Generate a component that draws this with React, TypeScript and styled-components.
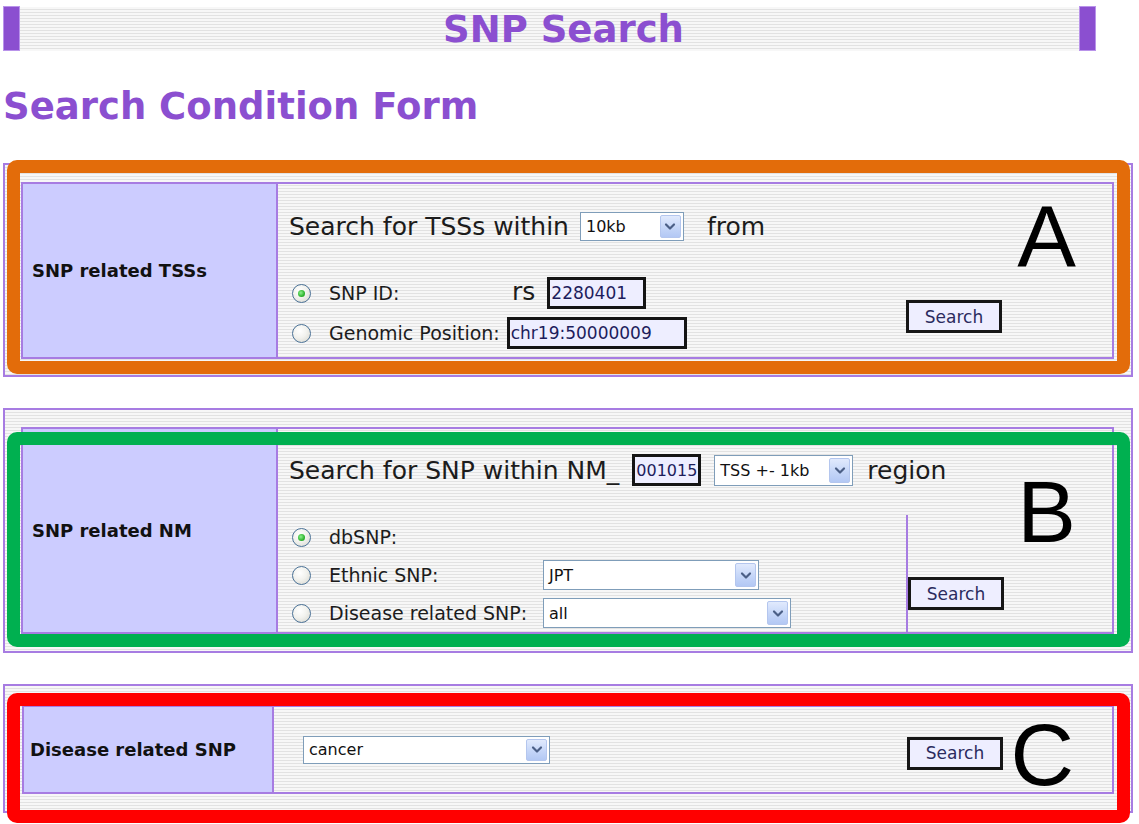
import React from 'react';
import styled, { createGlobalStyle } from 'styled-components';

const GlobalStyle = createGlobalStyle`
  html, body {
    margin: 0;
    padding: 0;
    background: #fff;
  }
  body {
    font-family: "DejaVu Sans", Verdana, sans-serif;
    color: #1a1a1a;
  }
`;

const purple = '#8b4fd0';
const line = '#a77ce2';
const stripes = `repeating-linear-gradient(180deg, #f7f7f7 0px, #f7f7f7 2px, #e2e2e2 2px, #e2e2e2 3px)`;

const Page = styled.div`
  width: 1133px;
  min-height: 824px;
  box-sizing: border-box;
  padding: 6px 0 0 3px;
`;

const Header = styled.header`
  display: flex;
  width: 1093px;
  height: 45px;
`;

const HeaderCap = styled.div`
  width: 17px;
  background: ${purple};
  border: 1px solid #b993ea;
  box-sizing: border-box;
`;

const HeaderBand = styled.div`
  flex: 1;
  display: flex;
  align-items: center;
  justify-content: center;
  padding-left: 28px;
  margin: 1px 0 0;
  background: ${stripes};
`;

const SiteTitle = styled.h1`
  margin: 0;
  font-size: 37px;
  line-height: 1;
  font-weight: bold;
  color: ${purple};
`;

const FormHeading = styled.h2`
  margin: 34px 0 35px;
  font-size: 37px;
  line-height: 43px;
  font-weight: bold;
  color: ${purple};
`;

const PanelStack = styled.div`
  display: flex;
  flex-direction: column;
  gap: 31px;
`;

const Panel = styled.section<{ $pad: string }>`
  position: relative;
  border: 2px solid ${line};
  background: ${stripes};
  padding: ${p => p.$pad};
`;

const FormTable = styled.div<{ $labelWidth: number }>`
  display: grid;
  grid-template-columns: ${p => p.$labelWidth}px 1fr;
  border: 2px solid ${line};
`;

const LabelCell = styled.div<{ $indent: number }>`
  display: flex;
  align-items: center;
  padding-left: ${p => p.$indent}px;
  background: #ccccff;
  border-right: 2px solid ${line};
  font-size: 18px;
  font-weight: bold;
  color: #111;
`;

const QueryLine = styled.div<{ $pad: string }>`
  display: flex;
  align-items: center;
  height: 32px;
  padding: ${p => p.$pad};
  font-size: 25px;
  color: #1c1c1c;
  white-space: nowrap;
`;

const Spacer = styled.span<{ $w: number }>`
  display: inline-block;
  width: ${p => p.$w}px;
`;

const OptionList = styled.div<{ $pad: string }>`
  display: flex;
  flex-direction: column;
  padding: ${p => p.$pad};
`;

const OptionRow = styled.div<{ $h: number }>`
  display: flex;
  align-items: center;
  height: ${p => p.$h}px;
  padding-left: 14px;
  font-size: 19px;
  color: #1c1c1c;
  white-space: nowrap;
`;

const Radio = styled.span<{ $checked?: boolean }>`
  position: relative;
  flex: none;
  width: 19px;
  height: 19px;
  box-sizing: border-box;
  border-radius: 50%;
  border: 1px solid #4a7196;
  background: radial-gradient(circle at 40% 35%, #ffffff 0%, #f2f2ee 45%, #d4d4cc 100%);
  margin-right: 18px;

  &::after {
    content: '';
    display: ${p => (p.$checked ? 'block' : 'none')};
    position: absolute;
    width: 7px;
    height: 7px;
    top: 5px;
    left: 5px;
    border-radius: 50%;
    background: radial-gradient(circle at 40% 40%, #8ef08e 0%, #2fb52f 60%, #1d8a1d 100%);
  }
`;

const OptionLabel = styled.span<{ $w?: number }>`
  display: inline-block;
  ${p => (p.$w ? `width: ${p.$w}px;` : '')}
`;

const Prefix = styled.span`
  font-size: 25px;
  margin-right: 12px;
  line-height: 1;
  transform: translateY(-2px);
`;

const TextField = styled.input<{ $w: number; $size?: number }>`
  width: ${p => p.$w}px;
  height: 32px;
  box-sizing: border-box;
  border: 3px solid #141414;
  background: #eeeeff;
  padding: 0 1px;
  font-family: "DejaVu Sans", Verdana, sans-serif;
  font-size: ${p => p.$size ?? 17}px;
  color: #1d1d5c;
  outline: none;
`;

const SelectBox = styled.div<{ $w: number; $h: number }>`
  display: inline-flex;
  align-items: stretch;
  justify-content: space-between;
  width: ${p => p.$w}px;
  height: ${p => p.$h}px;
  box-sizing: border-box;
  border: 1px solid #7f9db9;
  background: #fff;
  padding: 2px 2px 2px 5px;
  font-size: 16px;
  color: #111;
`;

const SelectValue = styled.span`
  display: flex;
  align-items: center;
`;

const SelectArrow = styled.span`
  display: flex;
  align-items: center;
  justify-content: center;
  width: 21px;
  box-sizing: border-box;
  border: 1px solid #b4c6ee;
  border-radius: 2px;
  background: linear-gradient(180deg, #e1eafd 0%, #c5d6f8 55%, #b3c8f4 100%);
`;

const SearchButton = styled.button`
  width: 96px;
  height: 33px;
  box-sizing: border-box;
  border: 3px solid #161616;
  background: #eeeeff;
  padding: 0;
  font-family: "DejaVu Sans", Verdana, sans-serif;
  font-size: 17px;
  color: #2b2b5e;
  cursor: pointer;
`;

const TssContent = styled.div`
  display: grid;
  grid-template-columns: 628px 1fr;
  align-items: start;
`;

const FullRow = styled.div`
  grid-column: 1 / -1;
`;

const ButtonCell = styled.div<{ $pad: string; $divider?: boolean }>`
  display: flex;
  align-items: flex-start;
  padding: ${p => p.$pad};
  ${p => (p.$divider ? `border-left: 2px solid ${line};` : '')}
`;

const NmContent = styled.div`
  display: flex;
  flex-direction: column;
`;

const SplitRow = styled.div`
  display: grid;
  grid-template-columns: 628px 1fr;
`;

const DiseaseContent = styled.div`
  display: grid;
  grid-template-columns: 633px 1fr;
  align-items: center;
  height: 85px;
`;

const DiseaseField = styled.div`
  padding-left: 29px;
  display: flex;
  align-items: center;
`;

const Annotation = styled.div<{ $color: string; $top: number; $bottom: number }>`
  position: absolute;
  left: 2px;
  right: 1px;
  top: ${p => p.$top}px;
  bottom: ${p => p.$bottom}px;
  border: 13px solid ${p => p.$color};
  border-radius: 10px;
  pointer-events: none;
`;

const AnnotationLetter = styled.span<{ $top: number; $right: number }>`
  position: absolute;
  top: ${p => p.$top}px;
  right: ${p => p.$right}px;
  font-family: "Liberation Sans", Arial, sans-serif;
  font-size: 88px;
  line-height: 1;
  color: #000;
  pointer-events: none;
`;

const Chevron = () => (
  <svg width="12" height="9" viewBox="0 0 12 9">
    <path d="M2 2.5 L6 6.5 L10 2.5" fill="none" stroke="#4b5f86" strokeWidth="2.2" strokeLinecap="round" strokeLinejoin="round" />
  </svg>
);

const Select: React.FC<{ value: string; w: number; h?: number }> = ({ value, w, h = 30 }) => (
  <SelectBox $w={w} $h={h}>
    <SelectValue>{value}</SelectValue>
    <SelectArrow>
      <Chevron />
    </SelectArrow>
  </SelectBox>
);

export default function App() {
  return (
    <>
      <GlobalStyle />
      <Page>
        <Header>
          <HeaderCap />
          <HeaderBand>
            <SiteTitle>SNP Search</SiteTitle>
          </HeaderBand>
          <HeaderCap />
        </Header>

        <FormHeading>Search Condition Form</FormHeading>

        <PanelStack>
          {/* A: TSSs near an SNP */}
          <Panel $pad="17px 17px 16px 16px">
            <FormTable $labelWidth={255}>
              <LabelCell $indent={9}>SNP related TSSs</LabelCell>
              <TssContent>
                <FullRow>
                  <QueryLine $pad="26px 0 0 11px">
                    Search for TSSs within
                    <Spacer $w={11} />
                    <Select value="10kb" w={104} h={29} />
                    <Spacer $w={23} />
                    from
                  </QueryLine>
                </FullRow>
                <OptionList $pad="31px 0 4px">
                  <OptionRow $h={40}>
                    <Radio $checked />
                    <OptionLabel $w={183}>SNP ID:</OptionLabel>
                    <Prefix>rs</Prefix>
                    <TextField $w={99} value="2280401" readOnly />
                  </OptionRow>
                  <OptionRow $h={40}>
                    <Radio />
                    <OptionLabel>Genomic Position:</OptionLabel>
                    <Spacer $w={7} />
                    <TextField $w={180} value="chr19:50000009" readOnly />
                  </OptionRow>
                </OptionList>
                <ButtonCell $pad="58px 0 0 0">
                  <SearchButton type="button">Search</SearchButton>
                </ButtonCell>
              </TssContent>
            </FormTable>
            <Annotation $color="#e36c0a" $top={-5} $bottom={1} />
            <AnnotationLetter $top={28} $right={55}>A</AnnotationLetter>
          </Panel>

          {/* B: SNPs around an NM */}
          <Panel $pad="17px 17px 17px 16px">
            <FormTable $labelWidth={255}>
              <LabelCell $indent={9}>SNP related NM</LabelCell>
              <NmContent>
                <QueryLine $pad="25px 0 29px 11px">
                  Search for SNP within NM_
                  <Spacer $w={13} />
                  <TextField $w={69} $size={16} value="001015" readOnly />
                  <Spacer $w={13} />
                  <Select value="TSS +- 1kb" w={139} h={31} />
                  <Spacer $w={14} />
                  region
                </QueryLine>
                <SplitRow>
                  <OptionList $pad="3px 0 0">
                    <OptionRow $h={38}>
                      <Radio $checked />
                      <OptionLabel>dbSNP:</OptionLabel>
                    </OptionRow>
                    <OptionRow $h={38}>
                      <Radio />
                      <OptionLabel $w={214}>Ethnic SNP:</OptionLabel>
                      <Select value="JPT" w={216} />
                    </OptionRow>
                    <OptionRow $h={38}>
                      <Radio />
                      <OptionLabel $w={214}>Disease related SNP:</OptionLabel>
                      <Select value="all" w={248} />
                    </OptionRow>
                  </OptionList>
                  <ButtonCell $pad="62px 0 0 0" $divider>
                    <SearchButton type="button">Search</SearchButton>
                  </ButtonCell>
                </SplitRow>
              </NmContent>
            </FormTable>
            <Annotation $color="#00b050" $top={22} $bottom={4} />
            <AnnotationLetter $top={58} $right={55}>B</AnnotationLetter>
          </Panel>

          {/* C: SNPs tied to a disease */}
          <Panel $pad="19px 17px 17px 17px">
            <FormTable $labelWidth={250}>
              <LabelCell $indent={6}>Disease related SNP</LabelCell>
              <DiseaseContent>
                <DiseaseField>
                  <Select value="cancer" w={247} h={28} />
                </DiseaseField>
                <ButtonCell $pad="7px 0 0 0">
                  <SearchButton type="button">Search</SearchButton>
                </ButtonCell>
              </DiseaseContent>
            </FormTable>
            <Annotation $color="#ff0000" $top={7} $bottom={-12} />
            <AnnotationLetter $top={25} $right={57}>C</AnnotationLetter>
          </Panel>
        </PanelStack>
      </Page>
    </>
  );
}
